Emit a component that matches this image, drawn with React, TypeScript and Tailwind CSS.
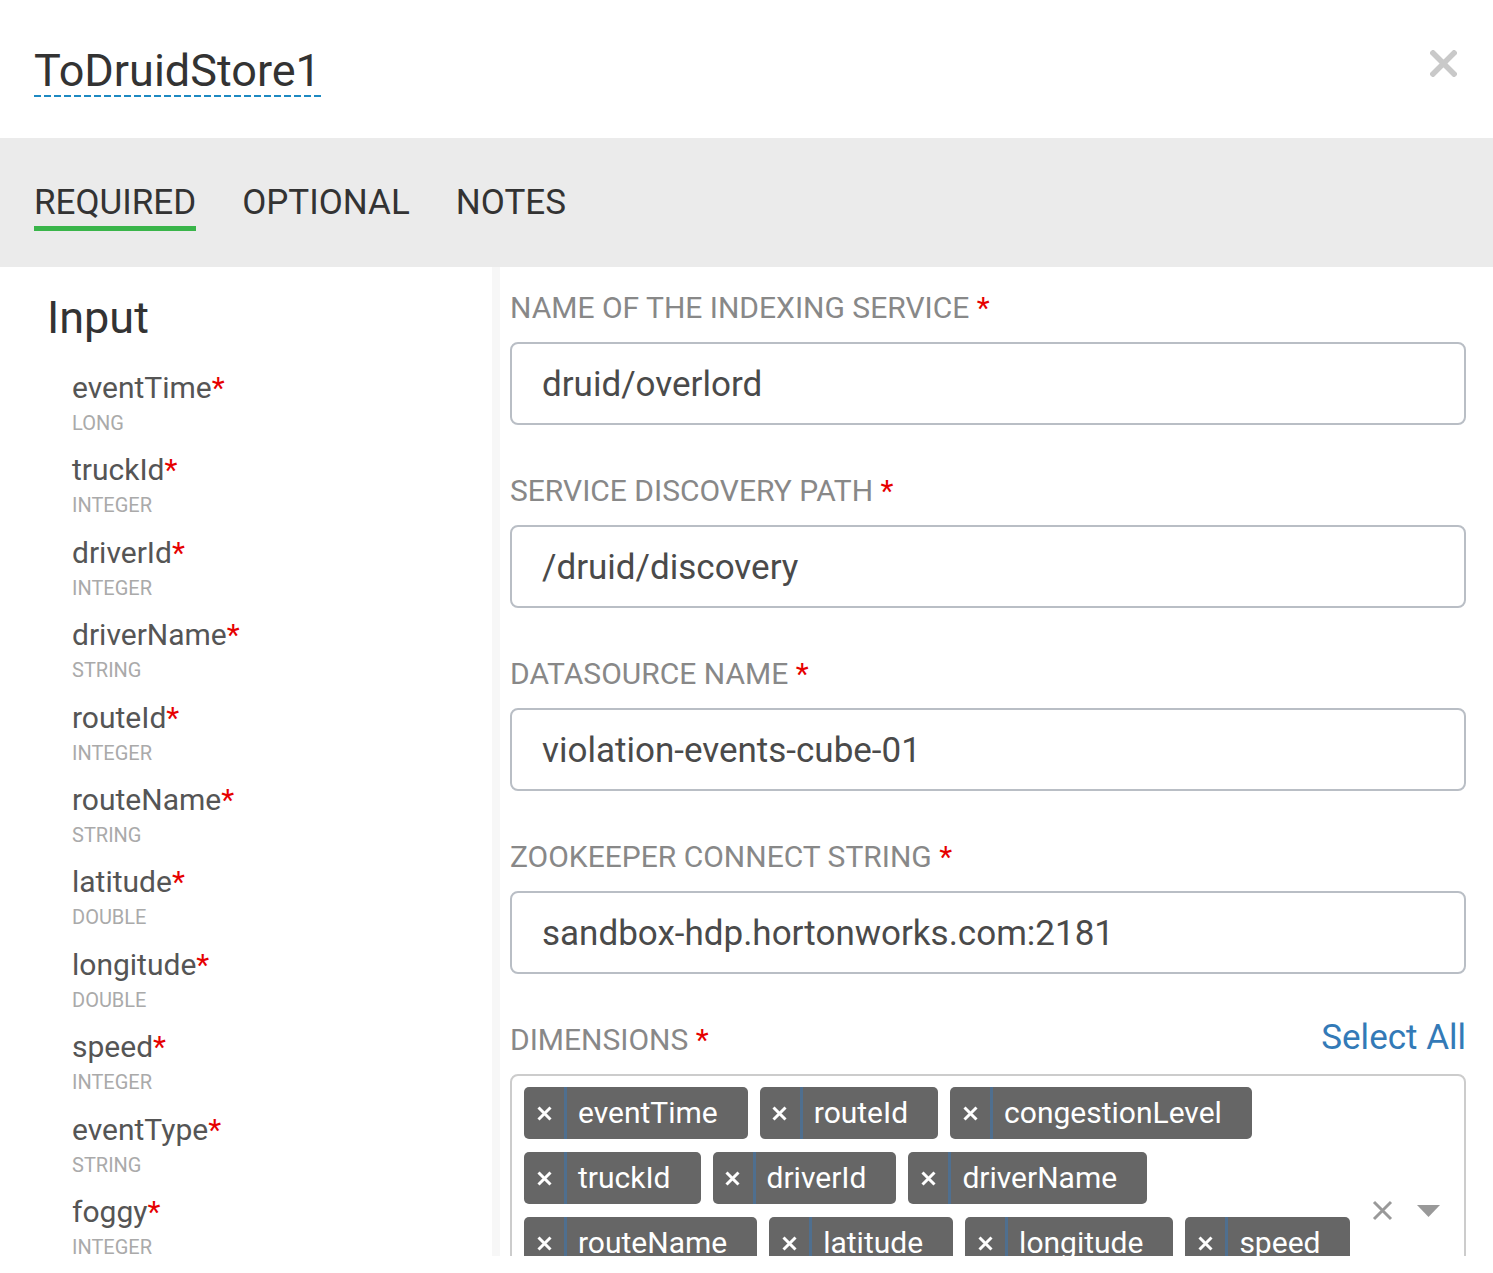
const fields = [
  { name: 'eventTime', type: 'LONG' },
  { name: 'truckId', type: 'INTEGER' },
  { name: 'driverId', type: 'INTEGER' },
  { name: 'driverName', type: 'STRING' },
  { name: 'routeId', type: 'INTEGER' },
  { name: 'routeName', type: 'STRING' },
  { name: 'latitude', type: 'DOUBLE' },
  { name: 'longitude', type: 'DOUBLE' },
  { name: 'speed', type: 'INTEGER' },
  { name: 'eventType', type: 'STRING' },
  { name: 'foggy', type: 'INTEGER' },
  { name: 'rainy', type: 'INTEGER' },
]

const config = [
  { label: 'NAME OF THE INDEXING SERVICE', value: 'druid/overlord' },
  { label: 'SERVICE DISCOVERY PATH', value: '/druid/discovery' },
  { label: 'DATASOURCE NAME', value: 'violation-events-cube-01' },
  { label: 'ZOOKEEPER CONNECT STRING', value: 'sandbox-hdp.hortonworks.com:2181' },
]

const dimensions = [
  'eventTime',
  'routeId',
  'congestionLevel',
  'truckId',
  'driverId',
  'driverName',
  'routeName',
  'latitude',
  'longitude',
  'speed',
  'eventType',
  'foggy',
  'rainy',
  'windy',
]

function Tag({ label }: { label: string }) {
  return (
    <div className="flex h-[52px] items-stretch rounded-[5px] bg-[#666666] text-white">
      <span className="flex w-[40px] items-center justify-center">
        <svg width="15" height="15" viewBox="0 0 15 15">
          <path d="M1.5 1.5 L13.5 13.5 M13.5 1.5 L1.5 13.5" stroke="#ffffff" strokeWidth="3" />
        </svg>
      </span>
      <span className="w-[3px] bg-[#4f6f8f]" />
      <span className="flex items-center pl-[11px] pr-[30px] text-[30px] leading-none">{label}</span>
    </div>
  )
}

export default function App() {
  return (
    <div className="h-[1273px] w-[1493px] bg-white font-['Roboto','Liberation_Sans',sans-serif]">
      <div className="h-[1256px] overflow-hidden">
        {/* Header */}
        <div className="relative h-[138px] pl-[34px]">
          <div className="inline-block pt-[46px]">
            <h1 className="text-[45px] leading-[49px] text-[#333333]">ToDruidStore1</h1>
            <div className="h-[2px] w-[288px] bg-[repeating-linear-gradient(90deg,#1d89c2_0_7px,transparent_7px_10px)]" />
          </div>
          <button className="absolute right-[36px] top-[50px]">
            <svg width="27" height="27" viewBox="0 0 27 27">
              <path d="M3 3 L24 24 M24 3 L3 24" stroke="#c9c9c9" strokeWidth="5.5" strokeLinecap="square" />
            </svg>
          </button>
        </div>

        {/* Tabs */}
        <div className="flex h-[129px] gap-[46px] bg-[#ebebeb] pl-[34px] pt-[44px]">
          <div className="flex flex-col">
            <span className="text-[35px] leading-[42px] text-[#333333]">REQUIRED</span>
            <span className="mt-[2px] h-[5px] bg-[#39b54a]" />
          </div>
          <span className="text-[35px] leading-[42px] text-[#333333]">OPTIONAL</span>
          <span className="text-[35px] leading-[42px] text-[#333333]">NOTES</span>
        </div>

        <div className="flex">
          {/* Input schema */}
          <div className="w-[500px] border-r-[8px] border-[#f7f7f7] pl-[47px] pt-[25px]">
            <h2 className="text-[45px] leading-[52px] text-[#333333]">Input</h2>
            <div className="mt-[27px] pl-[25px]">
              {fields.map((f) => (
                <div key={f.name} className="h-[82.4px]">
                  <div className="text-[30px] leading-[34px] text-[#555555]">
                    {f.name}
                    <span className="text-[#e60000]">*</span>
                  </div>
                  <div className="mt-[7px] text-[20px] leading-[22px] text-[#aaaaaa]">{f.type}</div>
                </div>
              ))}
            </div>
          </div>

          {/* Config form */}
          <div className="flex-1 pl-[10px] pr-[27px] pt-[23px]">
            {config.map((c) => (
              <div key={c.label} className="mb-[48px]">
                <div className="text-[30px] leading-[36px] text-[#888888]">
                  {c.label} <span className="text-[#e60000]">*</span>
                </div>
                <div className="mt-[16px] flex h-[83px] items-center rounded-[8px] border-2 border-[#b9bec5] pl-[30px] pt-[4px] text-[35px] text-[#4a4a4a]">
                  {c.value}
                </div>
              </div>
            ))}

            <div className="-mt-[4px] flex items-end justify-between">
              <div className="text-[30px] leading-[36px] text-[#888888]">
                DIMENSIONS <span className="text-[#e60000]">*</span>
              </div>
              <a className="text-[35px] leading-[40px] text-[#337ab7]">Select All</a>
            </div>
            <div className="mt-[16px] flex rounded-[8px] border-2 border-[#cccccc] py-[11px] pl-[12px]">
              <div className="flex flex-1 flex-wrap gap-x-[12px] gap-y-[13px]">
                {dimensions.map((d) => (
                  <Tag key={d} label={d} />
                ))}
              </div>
              <div className="flex w-[100px] items-center pl-[8px]">
                <svg width="21" height="21" viewBox="0 0 21 21">
                  <path d="M2 2 L19 19 M19 2 L2 19" stroke="#999999" strokeWidth="3" />
                </svg>
                <svg className="ml-[24px]" width="23" height="12" viewBox="0 0 23 12">
                  <path d="M0 0 H23 L11.5 12 Z" fill="#999999" />
                </svg>
              </div>
            </div>
          </div>
        </div>
      </div>
    </div>
  )
}
